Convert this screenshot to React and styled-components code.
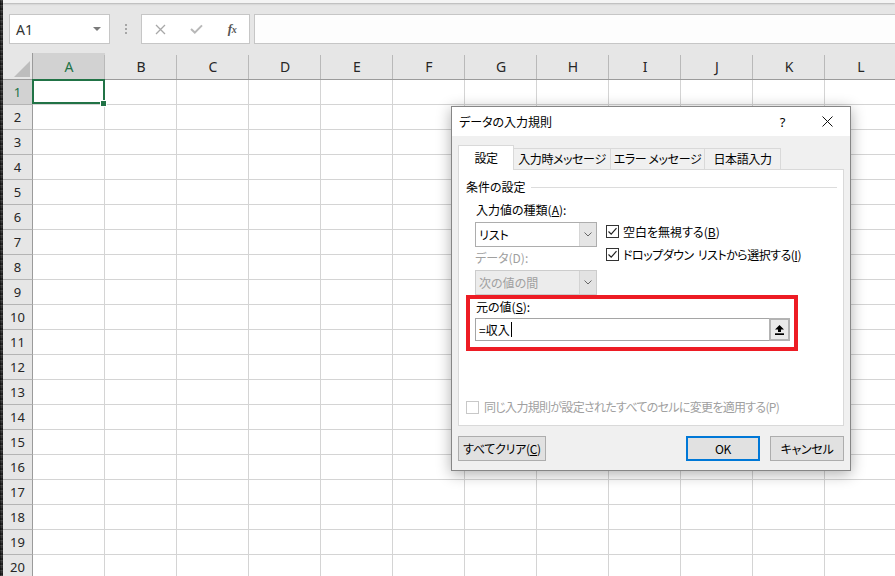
import React from 'react';
import styled, { createGlobalStyle } from 'styled-components';

const GlobalStyle = createGlobalStyle`
  html, body { margin: 0; padding: 0; overflow: hidden; background: #e6e6e6; }
  *, *::before, *::after { box-sizing: border-box; }
`;

const LATIN = `"Noto Sans", "Noto Sans CJK JP", sans-serif`;
const JP = `"Noto Sans CJK JP", "Noto Sans", sans-serif`;

const COLS = ['A', 'B', 'C', 'D', 'E', 'F', 'G', 'H', 'I', 'J', 'K', 'L'];
const ROWS = Array.from({ length: 20 }, (_, i) => i + 1);

/* ---------- workbook ---------- */
const Screen = styled.div`
  position: relative;
  width: 895px;
  height: 576px;
  overflow: hidden;
  display: flex;
  background: #e6e6e6;
`;

const EdgeStrip = styled.div`
  width: 3px;
  flex: none;
  background:
    repeating-linear-gradient(180deg, rgba(255,255,255,0.08) 0 1px, transparent 1px 3px, rgba(0,0,0,0.35) 3px 5px),
    linear-gradient(90deg, #161616, #3c3c3c 55%, #242424);
`;

const Workbook = styled.div`
  flex: 1;
  min-width: 0;
  display: flex;
  flex-direction: column;
`;

const TopStrip = styled.div`
  height: 3px;
  flex: none;
  background: #f4f4f4;
  box-shadow: 0 1px 2px rgba(0, 0, 0, 0.22);
  position: relative;
  z-index: 1;
`;

const FormulaBar = styled.div`
  height: 50px;
  flex: none;
  display: flex;
  align-items: flex-start;
  padding: 11px 0 0 6px;
`;

const NameBox = styled.div`
  width: 101px;
  height: 30px;
  flex: none;
  background: #fff;
  border: 1px solid #c6c6c6;
  display: flex;
  align-items: center;
  justify-content: space-between;
  padding: 0 8px 0 6px;
  font-family: ${LATIN};
  font-size: 14px;
  color: #333;
`;

const DropCaret = styled.span`
  width: 0;
  height: 0;
  border-left: 4px solid transparent;
  border-right: 4px solid transparent;
  border-top: 4px solid #7a7a7a;
`;

const Grip = styled.div`
  width: 31px;
  height: 30px;
  flex: none;
  display: flex;
  flex-direction: column;
  align-items: center;
  justify-content: center;
  gap: 2px;
`;

const GripDot = styled.span`
  width: 2px;
  height: 2px;
  background: #a6a6a6;
`;

const FxButtons = styled.div`
  width: 109px;
  height: 30px;
  flex: none;
  background: #fff;
  border: 1px solid #c6c6c6;
  display: grid;
  grid-template-columns: repeat(3, 36px);
  align-items: center;
  justify-items: center;
`;

const FxLabel = styled.span`
  font-family: "Liberation Serif", serif;
  font-style: italic;
  font-weight: bold;
  font-size: 13px;
  color: #555;
  letter-spacing: -0.5px;
  & > small {
    font-size: 10px;
  }
`;

const FormulaInput = styled.div`
  flex: 1;
  height: 30px;
  margin-left: 4px;
  background: #fdfdfd;
  border: 1px solid #c6c6c6;
  border-right: none;
`;

const Sheet = styled.div`
  flex: none;
  display: grid;
  grid-template-columns: 30px repeat(12, 72px);
  grid-template-rows: 27px;
  grid-auto-rows: 25px;
  background: #fff;
`;

const Corner = styled.div`
  position: relative;
  background: #e6e6e6;
  border-right: 1px solid #9b9b9b;
  border-bottom: 1px solid #9b9b9b;
  &::after {
    content: '';
    position: absolute;
    right: 2px;
    bottom: 2px;
    width: 16px;
    height: 16px;
    background: #bdbdbd;
    clip-path: polygon(100% 0, 100% 100%, 0 100%);
  }
`;

const ColHeader = styled.div`
  position: relative;
  background: ${p => (p.$active ? '#d2d2d2' : '#e6e6e6')};
  border-bottom: 1px solid #9b9b9b;
  display: flex;
  align-items: center;
  justify-content: center;
  font-family: ${LATIN};
  font-size: 14px;
  color: ${p => (p.$active ? '#217346' : '#262626')};
  &::after {
    content: '';
    position: absolute;
    right: 0;
    top: 2px;
    bottom: 0;
    width: 1px;
    background: #b9b9b9;
  }
`;

const RowHeader = styled.div`
  background: ${p => (p.$active ? '#d2d2d2' : '#e6e6e6')};
  border-right: 1px solid #9b9b9b;
  border-bottom: 1px solid #b4b4b4;
  display: flex;
  align-items: center;
  justify-content: center;
  font-family: ${LATIN};
  font-size: 13px;
  color: ${p => (p.$active ? '#217346' : '#262626')};
`;

const Cell = styled.div`
  position: relative;
  border-right: 1px solid #d4d4d4;
  border-bottom: 1px solid #d4d4d4;
  z-index: ${p => (p.$selected ? 2 : 0)};
  ${p =>
    p.$selected &&
    `
    &::before {
      content: '';
      position: absolute;
      inset: -1px -1px 0 -1px;
      border: 2px solid #217346;
    }
    &::after {
      content: '';
      position: absolute;
      right: -3px;
      bottom: -3px;
      width: 7px;
      height: 7px;
      background: #217346;
      border: 1px solid #fff;
    }
  `}
`;

/* ---------- dialog ---------- */
const Dialog = styled.div`
  position: absolute;
  left: 451px;
  top: 106px;
  width: 400px;
  height: 365px;
  z-index: 10;
  display: flex;
  flex-direction: column;
  background: #f0f0f0;
  border: 1px solid #868686;
  box-shadow: 0 3px 14px rgba(0, 0, 0, 0.32);
  font-family: ${JP};
  font-size: 12px;
  font-feature-settings: "palt";
  color: #000;
`;

const TitleBar = styled.div`
  height: 29px;
  flex: none;
  background: #fff;
  display: flex;
  align-items: center;
  padding-left: 7px;
`;

const TitleText = styled.div`
  flex: 1;
  line-height: 16px;
`;

const TitleButton = styled.div`
  width: 45px;
  height: 29px;
  display: flex;
  align-items: center;
  justify-content: center;
  font-size: 13px;
  font-family: ${LATIN};
`;

const DialogBody = styled.div`
  flex: 1;
  display: flex;
  flex-direction: column;
  padding: 9px 6px 9px 6px;
`;

const TabStrip = styled.div`
  height: 24px;
  flex: none;
  display: flex;
  align-items: flex-end;
  position: relative;
  z-index: 1;
`;

const Tab = styled.div`
  width: ${p => p.$w}px;
  height: ${p => (p.$active ? 25 : 21)}px;
  margin-bottom: ${p => (p.$active ? -1 : 0)}px;
  margin-left: ${p => (p.$first ? 0 : -1)}px;
  background: ${p => (p.$active ? '#fff' : '#f0f0f0')};
  border: 1px solid #d9d9d9;
  border-bottom: none;
  display: flex;
  align-items: center;
  justify-content: center;
  line-height: 16px;
  letter-spacing: -0.4px;
  white-space: nowrap;
  z-index: ${p => (p.$active ? 2 : 1)};
`;

const Panel = styled.div`
  height: 257px;
  flex: none;
  background: #fff;
  border: 1px solid #d9d9d9;
  display: flex;
  flex-direction: column;
`;

const Legend = styled.div`
  margin-top: 9px;
  height: 16px;
  display: flex;
  align-items: center;
  padding: 0 6px 0 7px;
  line-height: 16px;
`;

const LegendLine = styled.span`
  flex: 1;
  height: 1px;
  margin-left: 5px;
  background: #dcdcdc;
`;

const FieldGrid = styled.div`
  margin-top: 7px;
  padding-left: 16px;
  display: grid;
  grid-template-columns: 122px 1fr;
  column-gap: 9px;
`;

const Column = styled.div`
  display: flex;
  flex-direction: column;
  padding-top: ${p => p.$offset || 0}px;
`;

const Label = styled.div`
  height: 16px;
  line-height: 16px;
  white-space: nowrap;
  color: ${p => (p.$disabled ? '#a0a0a0' : '#000')};
  margin-top: ${p => p.$mt || 0}px;
  margin-bottom: ${p => p.$mb || 0}px;
  padding-left: ${p => p.$pl || 0}px;
`;

const Select = styled.div`
  height: 25px;
  display: flex;
  border: 1px solid ${p => (p.$disabled ? '#cccccc' : '#adadad')};
  background: ${p => (p.$disabled ? '#ececec' : '#fff')};
  color: ${p => (p.$disabled ? '#a0a0a0' : '#000')};
`;

const SelectValue = styled.div`
  flex: 1;
  padding-left: 3px;
  line-height: 23px;
`;

const SelectArrow = styled.div`
  width: 17px;
  background: ${p => (p.$disabled ? '#e3e3e3' : '#e5e5e5')};
  border-left: 1px solid ${p => (p.$disabled ? '#d3d3d3' : '#d6d6d6')};
  display: flex;
  align-items: center;
  justify-content: center;
`;

const CheckRow = styled.label`
  height: ${p => p.$h || 23}px;
  display: flex;
  align-items: center;
  gap: ${p => p.$gap || 4}px;
  line-height: 16px;
  white-space: nowrap;
  color: ${p => (p.$disabled ? '#a0a0a0' : '#000')};
`;

const CheckText = styled.span`
  letter-spacing: ${p => p.$ls || 0}px;
  word-spacing: ${p => p.$ws || 0}px;
`;

const CheckBox = styled.span`
  width: 13px;
  height: 13px;
  flex: none;
  background: #fff;
  border: 1px solid ${p => (p.$disabled ? '#c8c8c8' : '#333')};
  display: flex;
  align-items: center;
  justify-content: center;
`;

const HighlightFrame = styled.div`
  margin-left: 7px;
  width: 332px;
  border: 4px solid #ed1c24;
  padding: 0 4px 6px 5px;
  display: flex;
  flex-direction: column;
`;

const SourceInput = styled.div`
  margin-top: 3px;
  height: 23px;
  display: flex;
  border: 1px solid #a5a5a5;
  background: #fff;
`;

const SourceText = styled.div`
  flex: 1;
  display: flex;
  align-items: center;
  padding-left: 3px;
  line-height: 16px;
`;

const Caret = styled.span`
  width: 1px;
  height: 15px;
  margin-left: 1px;
  background: #000;
`;

const CollapseButton = styled.div`
  width: 21px;
  margin: -1px -1px -1px 0;
  background: #eaeaea;
  border: 2px solid #b3b3b3;
  display: flex;
  align-items: center;
  justify-content: center;
`;

const ApplyRow = styled.div`
  margin-top: auto;
  padding: 0 0 10px 7px;
`;

const ButtonRow = styled.div`
  margin-top: 10px;
  height: 25px;
  flex: none;
  display: flex;
  align-items: center;
`;

const Button = styled.button`
  width: ${p => p.$w}px;
  height: 25px;
  margin-left: ${p => p.$ml || 0};
  padding: 0;
  background: #e1e1e1;
  border: ${p => (p.$primary ? '2px solid #0078d7' : '1px solid #adadad')};
  font-family: ${JP};
  font-size: 12px;
  font-feature-settings: "palt";
  line-height: 16px;
  letter-spacing: -0.3px;
  color: #000;
  white-space: nowrap;
`;

const Chevron = () => (
  <svg width="8" height="5" viewBox="0 0 8 5">
    <polyline points="0.5,0.5 4,4 7.5,0.5" fill="none" stroke="#666" strokeWidth="1" />
  </svg>
);

const Check = () => (
  <svg width="11" height="11" viewBox="0 0 11 11">
    <polyline points="1.5,5.5 4.2,8.2 9.5,2.2" fill="none" stroke="#222" strokeWidth="1.2" />
  </svg>
);

export default function App() {
  return (
    <Screen>
      <GlobalStyle />
      <EdgeStrip />
      <Workbook>
        <TopStrip />
        <FormulaBar>
          <NameBox>
            <span>A1</span>
            <DropCaret />
          </NameBox>
          <Grip>
            <GripDot />
            <GripDot />
            <GripDot />
          </Grip>
          <FxButtons>
            <svg width="11" height="11" viewBox="0 0 11 11">
              <path d="M1 1 L10 10 M10 1 L1 10" stroke="#a8a8a8" strokeWidth="1.3" />
            </svg>
            <svg width="13" height="10" viewBox="0 0 13 10">
              <polyline points="1,5 4.8,8.6 12,1.4" fill="none" stroke="#b8b8b8" strokeWidth="2" />
            </svg>
            <FxLabel>
              f<small>x</small>
            </FxLabel>
          </FxButtons>
          <FormulaInput />
        </FormulaBar>
        <Sheet>
          <Corner />
          {COLS.map(c => (
            <ColHeader key={c} $active={c === 'A'}>
              {c}
            </ColHeader>
          ))}
          {ROWS.map(r => (
            <React.Fragment key={r}>
              <RowHeader $active={r === 1}>{r}</RowHeader>
              {COLS.map(c => (
                <Cell key={c} $selected={r === 1 && c === 'A'} />
              ))}
            </React.Fragment>
          ))}
        </Sheet>
      </Workbook>

      <Dialog>
        <TitleBar>
          <TitleText>データの入力規則</TitleText>
          <TitleButton>?</TitleButton>
          <TitleButton>
            <svg width="11" height="11" viewBox="0 0 11 11">
              <path d="M0.5 0.5 L10.5 10.5 M10.5 0.5 L0.5 10.5" stroke="#111" strokeWidth="1" />
            </svg>
          </TitleButton>
        </TitleBar>
        <DialogBody>
          <TabStrip>
            <Tab $w={56} $active $first>設定</Tab>
            <Tab $w={98}>入力時メッセージ</Tab>
            <Tab $w={95}>エラー メッセージ</Tab>
            <Tab $w={77}>日本語入力</Tab>
          </TabStrip>
          <Panel>
            <Legend>
              条件の設定
              <LegendLine />
            </Legend>
            <FieldGrid>
              <Column>
                <Label $mb={4} $pl={1}>
                  入力値の種類(<u>A</u>):
                </Label>
                <Select>
                  <SelectValue>リスト</SelectValue>
                  <SelectArrow>
                    <Chevron />
                  </SelectArrow>
                </Select>
                <Label $disabled $mt={3} $mb={4}>
                  データ(D):
                </Label>
                <Select $disabled>
                  <SelectValue>次の値の間</SelectValue>
                  <SelectArrow $disabled>
                    <Chevron />
                  </SelectArrow>
                </Select>
              </Column>
              <Column $offset={18}>
                <CheckRow>
                  <CheckBox>
                    <Check />
                  </CheckBox>
                  <CheckText>
                    空白を無視する(<u>B</u>)
                  </CheckText>
                </CheckRow>
                <CheckRow>
                  <CheckBox>
                    <Check />
                  </CheckBox>
                  <CheckText $ls={-0.5} $ws={2}>
                    ドロップダウン リストから選択する(<u>I</u>)
                  </CheckText>
                </CheckRow>
              </Column>
            </FieldGrid>
            <HighlightFrame>
              <Label $pl={1}>
                元の値(<u>S</u>):
              </Label>
              <SourceInput>
                <SourceText>
                  =収入
                  <Caret />
                </SourceText>
                <CollapseButton>
                  <svg width="9" height="10" viewBox="0 0 9 10">
                    <polygon points="4.5,0 9,4.5 6,4.5 6,7 3,7 3,4.5 0,4.5" fill="#000" />
                    <rect x="0" y="8.3" width="9" height="1.7" fill="#000" />
                  </svg>
                </CollapseButton>
              </SourceInput>
            </HighlightFrame>
            <ApplyRow>
              <CheckRow $disabled $h={16} $gap={5}>
                <CheckBox $disabled />
                <CheckText $ls={-0.7}>
                  同じ入力規則が設定されたすべてのセルに変更を適用する(P)
                </CheckText>
              </CheckRow>
            </ApplyRow>
          </Panel>
          <ButtonRow>
            <Button $w={88}>
              すべてクリア(<u>C</u>)
            </Button>
            <Button $w={74} $ml="auto" $primary>
              OK
            </Button>
            <Button $w={74} $ml="10px">
              キャンセル
            </Button>
          </ButtonRow>
        </DialogBody>
      </Dialog>
    </Screen>
  );
}
